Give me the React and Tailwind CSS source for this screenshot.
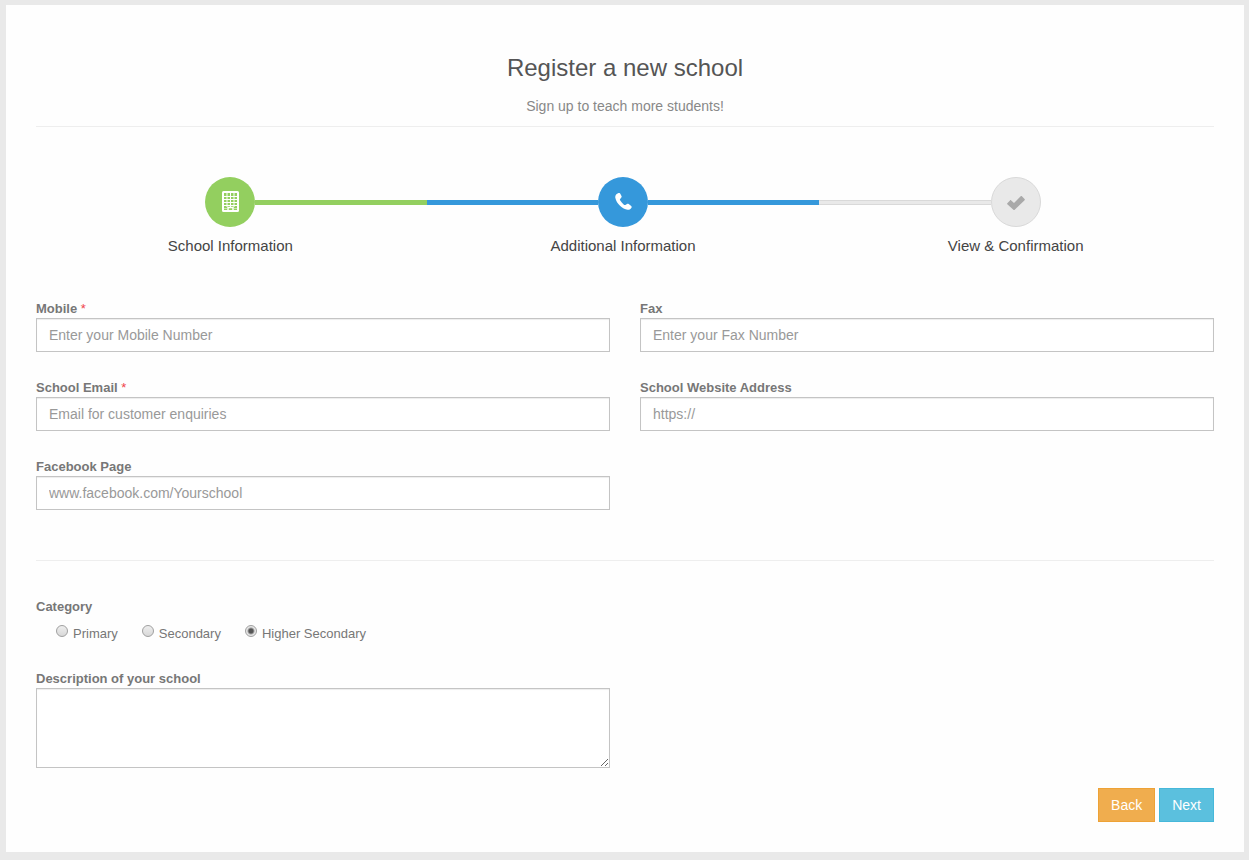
import React, { useState } from "react";

const inputClass =
  "block w-full border border-[#c4c4c4] bg-white px-3 text-sm text-[#555] placeholder-[#999] shadow-[inset_0_1px_1px_rgba(0,0,0,0.075)] outline-none focus:border-[#66afe9]";

const BuildingIcon = () => (
  <svg viewBox="0 0 18 22" className="h-[22px] w-[18px]" fill="none" stroke="#fff" aria-hidden="true">
    <rect x="2" y="1" width="15" height="19" rx="0.5" strokeWidth="2" />
    <path d="M6 2v14M9.500 2v14M13 2v14M3 5.500h13M3 8.500h13M3 11.500h13M3 14.500h13" strokeWidth="1" />
    <path d="M7 20v-3.500h5V20" strokeWidth="1.500" />
    <path d="M3 17.500h3M13 17.500h3" strokeWidth="0.5" />
  </svg>
);

const PhoneIcon = () => (
  <svg viewBox="0 0 17 17" className="mb-0.5 h-[17px] w-[17px]" fill="#fff" aria-hidden="true">
    <path d="M2.1.7C1 1.400 0 2.800.3 4.700c.6 3 2.500 6 4.700 8.100 2.300 2.200 5 3.600 7.500 4 1.800.2 3.300-.7 4-2.100.3-.7.200-1.300-.3-1.800l-2.500-1.800c-.5-.4-1.100-.4-1.700-.1l-1.600.9c-.5.3-1 .2-1.500-.2C7.400 10.300 6 8.800 5.100 7.300c-.3-.5-.3-1 .1-1.400l1.100-1.300c.4-.5.400-1.100.200-1.700L5.300.7C5 0 4.200-.2 3.500.1z" />
  </svg>
);

const CheckIcon = () => (
  <svg viewBox="0 0 18 14" className="mt-0.5 h-[14px] w-[18px]" fill="#a9a9a9" aria-hidden="true">
    <path d="M.3 7.200 3 4.400c.4-.4.800-.4 1.200 0l2.800 2.700L13.700.3c.4-.4.800-.4 1.200 0l2.700 2.700c.4.400.4.800 0 1.200L7.700 13.700c-.4.400-.9.400-1.300 0L.3 8.300c-.3-.3-.3-.8 0-1.100z" />
  </svg>
);

const Step = ({ icon, label, circle, left, right }) => (
  <li className="flex flex-1 flex-col items-center">
    <div className="flex w-full items-center">
      <span className={`h-[5px] flex-1 ${left}`} />
      <a
        href="#"
        aria-label={label}
        className={`flex h-[50px] w-[50px] items-center justify-center rounded-full ${circle}`}
      >
        {icon}
      </a>
      <span className={`h-[5px] flex-1 ${right}`} />
    </div>
    <span className="mt-2 text-[15px] leading-[22px] text-[#444]">{label}</span>
  </li>
);

const Label = ({ htmlFor, required, children }) => (
  <label htmlFor={htmlFor} className="block text-[13px] leading-[18px] font-bold text-[#777]">
    {children}
    {required && <span className="font-normal text-[#f0434a]"> *</span>}
  </label>
);

const Field = ({ id, label, placeholder, required, type = "text" }) => (
  <div>
    <Label htmlFor={id} required={required}>
      {label}
    </Label>
    <input id={id} type={type} placeholder={placeholder} className={`h-[34px] ${inputClass}`} />
  </div>
);

const categories = ["Primary", "Secondary", "Higher Secondary"];

const App = () => {
  const [category, setCategory] = useState("Higher Secondary");

  return (
    <div className="min-h-screen bg-[#e9e9e9] px-[5px] pt-[5px] pb-2 pl-[6px] font-['Liberation_Sans',Arial,sans-serif]">
      <main className="bg-[#fefefe] px-[30px] pt-12 pb-[30px]">
        {/* Header */}
        <header className="border-b border-[#eee] pb-[10px] text-center">
          <h1 className="text-2xl leading-[30px] text-[#555]">Register a new school</h1>
          <p className="mt-[13px] text-sm leading-5 text-[#888]">Sign up to teach more students!</p>
        </header>

        {/* Steps */}
        <ol className="mt-[50px] mr-0.5 -ml-0.5 flex">
          <Step
            icon={<BuildingIcon />}
            label="School Information"
            circle="bg-[#93cf5f]"
            left=""
            right="bg-[#93cf5f]"
          />
          <Step
            icon={<PhoneIcon />}
            label="Additional Information"
            circle="bg-[#3598db]"
            left="bg-[#3598db]"
            right="bg-[#3598db]"
          />
          <Step
            icon={<CheckIcon />}
            label="View & Confirmation"
            circle="border border-[#d9d9d9] bg-[#e9e9e9]"
            left="border-y border-[#d9d9d9] bg-[#e9e9e9]"
            right=""
          />
        </ol>

        <form onSubmit={(e) => e.preventDefault()}>
          {/* Contact details */}
          <div className="mt-[43px] grid grid-cols-2 gap-x-[30px] gap-y-[27px]">
            <Field id="mobile" label="Mobile" placeholder="Enter your Mobile Number" required />
            <Field id="fax" label="Fax" placeholder="Enter your Fax Number" />
            <Field id="email" label="School Email" placeholder="Email for customer enquiries" type="email" required />
            <Field id="website" label="School Website Address" placeholder="https://" />
            <Field id="facebook" label="Facebook Page" placeholder="www.facebook.com/Yourschool" />
          </div>

          <hr className="mt-[50px] border-[#eee]" />

          {/* Category */}
          <fieldset className="mt-[35px]">
            <legend className="text-[13px] leading-[22px] font-bold text-[#777]">Category</legend>
            <div className="mt-[5px] flex gap-6 pl-5">
              {categories.map((item) => (
                <label key={item} className="flex items-start gap-[5px] text-[13px] leading-[22px] text-[#777]">
                  <input
                    type="radio"
                    name="category"
                    value={item}
                    checked={category === item}
                    onChange={() => setCategory(item)}
                    className="mt-[2px] h-3 w-3 appearance-none rounded-full border border-[#a0a0a0] bg-linear-to-b from-[#eee] to-[#d8d8d8] checked:bg-[radial-gradient(circle,#555_0_2px,#e6e6e6_4px)]"
                  />
                  {item}
                </label>
              ))}
            </div>
          </fieldset>

          <div className="mt-[25px] grid grid-cols-2 gap-x-[30px]">
            <div>
              <Label htmlFor="description">Description of your school</Label>
              <textarea id="description" className={`h-20 py-1.5 ${inputClass}`} />
            </div>
          </div>

          <div className="mt-5 flex justify-end gap-1 text-sm leading-5 text-white">
            <button type="button" className="border border-[#eea236] bg-[#f0ad4e] px-3 py-1.5">
              Back
            </button>
            <button type="submit" className="border border-[#46b8da] bg-[#5bc0de] px-3 py-1.5">
              Next
            </button>
          </div>
        </form>
      </main>
    </div>
  );
};

export default App;
